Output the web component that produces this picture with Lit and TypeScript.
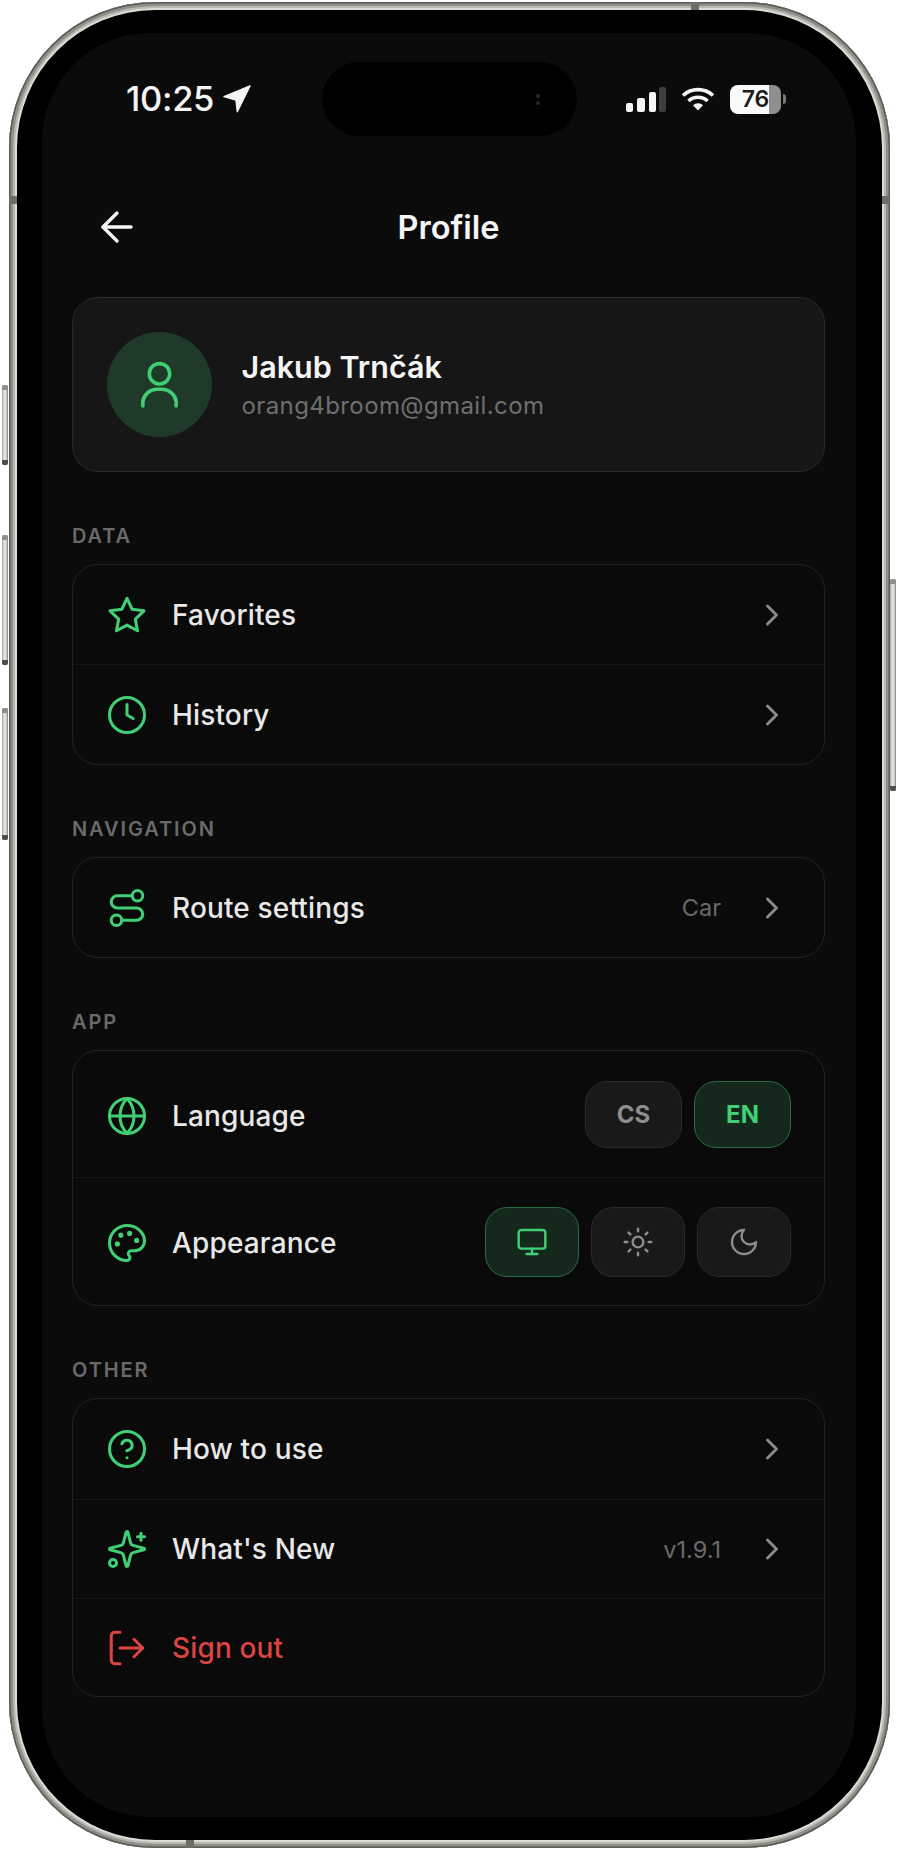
import { LitElement, html, css, svg } from "lit";
import { customElement } from "lit/decorators.js";

const ic = (size: number, sw: number, body: unknown) => html`<svg class="ic" width=${size} height=${size} viewBox="0 0 24 24" fill="none" stroke="currentColor" stroke-width=${sw} stroke-linecap="round" stroke-linejoin="round">${body}</svg>`;

const I = {
  back: svg`<path d="m12 19-7-7 7-7"/><path d="M19 12H5"/>`,
  user: svg`<path d="M5 21v-2a6 6 0 0 1 6-5h2a6 6 0 0 1 6 5v2"/><circle cx="12" cy="7.5" r="4.3"/>`,
  star: svg`<path d="M12 2.5l2.95 6.2 6.75.9-4.95 4.7 1.25 6.7L12 17.8l-6 3.2 1.25-6.7L2.3 9.6l6.75-.9z"/>`,
  clock: svg`<circle cx="12" cy="12" r="10"/><path d="M12 6v6l3.5 2"/>`,
  route: svg`<circle cx="6" cy="19" r="3"/><path d="M9 19h8.5a3.5 3.5 0 0 0 0-7h-11a3.5 3.5 0 0 1 0-7H15"/><circle cx="18" cy="5" r="3"/>`,
  globe: svg`<circle cx="12" cy="12" r="10"/><path d="M12 2a14.5 14.5 0 0 0 0 20 14.5 14.5 0 0 0 0-20"/><path d="M2 12h20"/>`,
  palette: svg`<path d="M12 2C6.5 2 2 6.5 2 12s4.5 10 10 10c.926 0 1.648-.746 1.648-1.688 0-.437-.18-.835-.437-1.125-.29-.289-.438-.652-.438-1.125a1.64 1.64 0 0 1 1.668-1.668h1.996c3.051 0 5.555-2.503 5.555-5.554C21.965 6.012 17.461 2 12 2z"/><circle cx="13.5" cy="6.5" r=".6" fill="currentColor"/><circle cx="17.5" cy="10.5" r=".6" fill="currentColor"/><circle cx="8.5" cy="7.5" r=".6" fill="currentColor"/><circle cx="6.5" cy="12.5" r=".6" fill="currentColor"/>`,
  help: svg`<circle cx="12" cy="12" r="10"/><path d="M9.09 9a3 3 0 0 1 5.83 1c0 2-3 3-3 3"/><path d="M12 17h.01"/>`,
  sparkles: svg`<path d="M9.937 15.5A2 2 0 0 0 8.5 14.063l-6.135-1.582a.5.5 0 0 1 0-.962L8.5 9.936A2 2 0 0 0 9.937 8.5l1.582-6.135a.5.5 0 0 1 .963 0L14.063 8.5A2 2 0 0 0 15.5 9.937l6.135 1.581a.5.5 0 0 1 0 .964L15.5 14.063a2 2 0 0 0-1.437 1.437l-1.582 6.135a.5.5 0 0 1-.963 0z"/><path d="M20 3v4"/><path d="M22 5h-4"/><circle cx="4" cy="20" r="2"/>`,
  logout: svg`<path d="M8 21H5a2 2 0 0 1-2-2V5a2 2 0 0 1 2-2h3"/><path d="m16 17 5-5-5-5"/><path d="M21 12H8"/>`,
  chevron: svg`<path d="m9 18 6-6-6-6"/>`,
  monitor: svg`<rect width="20" height="14" x="2" y="3" rx="2"/><path d="M8 21h8"/><path d="M12 17v4"/>`,
  sun: svg`<circle cx="12" cy="12" r="4"/><path d="M12 2v2"/><path d="M12 20v2"/><path d="m4.93 4.93 1.41 1.41"/><path d="m17.66 17.66 1.41 1.41"/><path d="M2 12h2"/><path d="M20 12h2"/><path d="m6.34 17.66-1.41 1.41"/><path d="m19.07 4.93-1.41 1.41"/>`,
  moon: svg`<path d="M12 3a6 6 0 0 0 9 9 9 9 0 1 1-9-9Z"/>`,
};

@customElement("app-root")
export class AppRoot extends LitElement {
  static styles = css`
    :host { display: block; position: relative; width: 900px; height: 1851px; background: #fff; font-family: Inter, "Liberation Sans", sans-serif; overflow: hidden; }
    * { box-sizing: border-box; }
    .ic { display: block; flex: none; }
    .wrap { padding: 2px 10.5px 3px 8.5px; height: 100%; }
    .frame { height: 100%; padding: 31px 33.5px; background: #000; border-radius: 146px;
      box-shadow: inset 0 0 0 1.5px #5c5b56, inset 0 0 0 4px #8f8e87, inset 0 0 0 6px #b9b8b1, inset 0 0 0 8px #dcdbd5; }
    .screen { height: 100%; background: #0b0b0b; border-radius: 108px; overflow: hidden; padding-top: 29px; color: #ececec; }

    .btn-side { position: absolute; width: 6px; background: linear-gradient(to right, #aaa9a3, #e6e4df 40%, #dcdad4 70%, #77766f); border-radius: 2px; }
    .btn-side::before, .btn-side::after { content: ""; position: absolute; left: 0; right: 0; height: 5px; }
    .btn-side::before { top: 0; background: #8f8e87; border-radius: 2px 2px 0 0; }
    .btn-side::after { bottom: 0; background: #4e4d49; border-radius: 0 0 2px 2px; }
    .b1 { left: 2px; top: 385px; height: 80px; }
    .b2 { left: 2px; top: 535px; height: 130px; }
    .b3 { left: 2px; top: 708px; height: 132px; }
    .b4 { left: 890px; top: 579px; height: 212px; }
    .band { position: absolute; background: #6e6d67; }
    .bv { width: 8px; height: 8px; }
    .bl { left: 8.5px; } .br { left: 881.5px; }
    .bt { top: 2px; left: 691px; } .bb { top: 1840px; left: 186px; }
    .by { top: 196px; }

    .status { display: flex; height: 74px; align-items: center; }
    .s-left { width: 279.5px; padding-left: 84px; display: flex; align-items: center; gap: 9px; }
    .time { font-size: 34.5px; font-weight: 500; color: #f4f4f4; line-height: 1; letter-spacing: -0.3px; }
    .island { width: 255px; height: 74px; border-radius: 37px; background: #000; display: flex; flex-direction: column; align-items: flex-end; justify-content: center; gap: 3px; padding-right: 37px; }
    .island i { display: block; width: 4px; height: 4px; border-radius: 50%; background: #2a2a2a; }
    .s-right { padding-left: 49.5px; display: flex; align-items: center; }
    .signal { margin-right: 15px; display: block; }
    .wifi { margin-right: 15px; display: block; }
    .battery { width: 51px; height: 29px; border-radius: 8px; background: linear-gradient(to right, #fafafa 0 39px, #8f8f8f 39px); color: #1a1a1a; font-size: 23px; font-weight: 600; display: flex; align-items: center; justify-content: center; line-height: 1; }
    .nub { width: 3px; height: 10px; margin-left: 2px; background: #777; border-radius: 0 3px 3px 0; }

    .content { padding: 0 31px 0 30px; }
    .header { display: grid; grid-template-columns: 1fr auto 1fr; align-items: center; height: 60px; margin-top: 61px; margin-bottom: 40px; }
    .back { margin-left: 21px; color: #f5f5f5; }
    .title { font-size: 32.5px; font-weight: 600; color: #f5f5f5; }

    .profile { height: 175px; border: 1.5px solid #2a2a2a; border-radius: 26px; background: #161616; display: flex; align-items: center; padding: 0 33px 0 33.5px; gap: 29.5px; }
    .avatar { width: 105.5px; height: 105.5px; border-radius: 50%; background: #1f3a29; color: #41cf75; display: flex; align-items: center; justify-content: center; flex: none; }
    .who { margin-top: 2px; }
    .name { font-size: 30.5px; font-weight: 600; color: #f5f5f5; line-height: 40px; }
    .email { font-size: 24px; color: #6f6f6f; line-height: 38px; letter-spacing: 0.4px; }

    .section { margin-top: 52px; }
    .label { font-size: 20px; font-weight: 600; letter-spacing: 1.9px; color: #6a6a6a; line-height: 24px; margin-bottom: 16px; }
    .card { border: 1.5px solid #232323; border-radius: 26px; background: #0a0a0a; overflow: hidden; }
    .row { height: 99px; display: flex; align-items: center; padding: 0 33px; color: #41cf75; }
    .row + .row { border-top: 1px solid #161616; }
    .row.tall { height: 100px; }
    .row.h1 { height: 126px; } .row.h2 { height: 128px; }
    .h1 > .ic, .h1 > .text, .h2 > .ic, .h2 > .text { margin-top: 3px; }
    .row.danger { color: #dc4444; height: 98px; }
    .text { flex: 1; margin-left: 24px; font-size: 28px; font-weight: 500; color: #e8e8e8; letter-spacing: 0.15px; }
    .danger .text { color: #dc4444; }
    .value { font-size: 23.5px; color: #6a6a6a; margin-right: 33px; }
    .chev { color: #8a8a8a; margin-right: 1px; }

    .group { display: flex; gap: 12px; }
    .pill { border: 1.5px solid #2a2a2a; background: #191919; border-radius: 22px; display: flex; align-items: center; justify-content: center; color: #8e8e8e; }
    .pill.on { background: #14291c; border-color: #2c6a44; color: #41cf75; }
    .lang { width: 97px; height: 67px; font-size: 24px; font-weight: 700; }
    .mode { width: 94px; height: 70px; }
  `;

  private link(icon: unknown, text: string, value = "", tall = false) {
    return html`<div class="row ${tall ? "tall" : ""}">${ic(42, 1.75, icon)}<span class="text">${text}</span>
      ${value ? html`<span class="value">${value}</span>` : ""}
      <span class="chev">${ic(36, 2, I.chevron)}</span></div>`;
  }

  render() {
    return html`
      <div class="wrap"><div class="frame"><div class="screen">
        <div class="status">
          <div class="s-left"><span class="time">10:25</span>
            <svg width="28" height="28" viewBox="-1 -1 28 28"><path d="M26 0 0 10.7 12 14l1.3 11.7z" fill="#f6f6f6" stroke="#f6f6f6" stroke-width="1.4" stroke-linejoin="round"/></svg>
          </div>
          <div class="island"><i></i><i></i></div>
          <div class="s-right">
            <svg class="signal" width="40" height="25" viewBox="0 0 40 25"><rect x="0" y="16" width="7" height="9" rx="2" fill="#f6f6f6"/><rect x="11" y="11" width="8" height="14" rx="2" fill="#f6f6f6"/><rect x="23" y="5" width="7" height="20" rx="2" fill="#f6f6f6"/><rect x="33" y="0" width="7" height="25" rx="2" fill="#3d3d3d"/></svg>
            <svg class="wifi" width="34" height="24" viewBox="0 0 34 24" fill="none" stroke="#f6f6f6" stroke-width="3.6"><path d="M2 8.5a22 22 0 0 1 30 0"/><path d="M7.5 14a14 14 0 0 1 19 0"/><path d="M17 23.5l-5-5.2a7 7 0 0 1 10 0z" fill="#f6f6f6" stroke="none"/></svg>
            <div class="battery">76</div><div class="nub"></div>
          </div>
        </div>
        <div class="content">
          <div class="header"><span class="back">${ic(48, 1.7, I.back)}</span><span class="title">Profile</span><span></span></div>
          <div class="profile">
            <div class="avatar">${ic(57, 1.5, I.user)}</div>
            <div class="who"><div class="name">Jakub Trnčák</div><div class="email">orang4broom@gmail.com</div></div>
          </div>
          <div class="section"><div class="label">DATA</div><div class="card">
            ${this.link(I.star, "Favorites")}${this.link(I.clock, "History", "", true)}
          </div></div>
          <div class="section"><div class="label">NAVIGATION</div><div class="card">
            ${this.link(I.route, "Route settings", "Car")}
          </div></div>
          <div class="section"><div class="label">APP</div><div class="card">
            <div class="row h1">${ic(42, 1.75, I.globe)}<span class="text">Language</span>
              <div class="group"><div class="pill lang">CS</div><div class="pill lang on">EN</div></div></div>
            <div class="row h2">${ic(42, 1.75, I.palette)}<span class="text">Appearance</span>
              <div class="group">
                <div class="pill mode on">${ic(32, 1.8, I.monitor)}</div>
                <div class="pill mode">${ic(32, 1.8, I.sun)}</div>
                <div class="pill mode">${ic(32, 1.8, I.moon)}</div>
              </div></div>
          </div></div>
          <div class="section"><div class="label">OTHER</div><div class="card">
            ${this.link(I.help, "How to use", "", true)}${this.link(I.sparkles, "What's New", "v1.9.1")}
            <div class="row danger">${ic(42, 1.75, I.logout)}<span class="text">Sign out</span></div>
          </div></div>
        </div>
      </div></div></div>
      <div class="btn-side b1"></div><div class="btn-side b2"></div><div class="btn-side b3"></div><div class="btn-side b4"></div>
      <div class="band bv bl by"></div><div class="band bv br by"></div><div class="band bv bt"></div><div class="band bv bb"></div>
    `;
  }
}
